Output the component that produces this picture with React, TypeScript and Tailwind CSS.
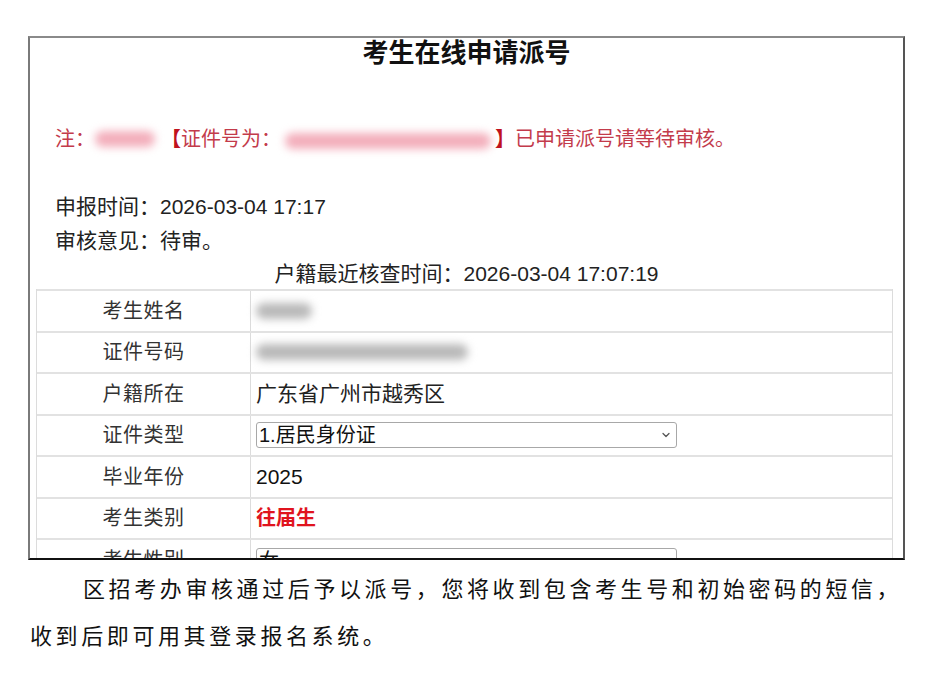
import { ChevronDown } from "lucide-react";

const cjk = "font-['Liberation_Sans','Noto_Sans_CJK_SC',sans-serif]";

function Blur({ w, tone }: { w: number; tone: "pink" | "gray" }) {
  return (
    <span
      className={
        "inline-block h-[16px] rounded-full blur-[4px] align-middle " +
        (tone === "pink" ? "bg-[#f3aebb]" : "bg-[#b9b9b9]")
      }
      style={{ width: w }}
    />
  );
}

function FakeSelect({ label }: { label: string }) {
  return (
    <div className="flex h-[26px] w-[421px] items-center justify-between rounded-[3px] border-[1.5px] border-[#a8a8a8] bg-white pl-[2px] pr-[4px]">
      <span className="text-[20px] leading-none text-[#111]">{label}</span>
      <ChevronDown className="h-[12px] w-[12px] text-[#555]" strokeWidth={2.5} />
    </div>
  );
}

type Row = { label: string; value: React.ReactNode };

const rows: Row[] = [
  { label: "考生姓名", value: <Blur w={56} tone="gray" /> },
  { label: "证件号码", value: <Blur w={212} tone="gray" /> },
  { label: "户籍所在", value: <span className="text-[21px] text-[#222]">广东省广州市越秀区</span> },
  { label: "证件类型", value: <FakeSelect label="1.居民身份证" /> },
  { label: "毕业年份", value: <span className="text-[21px] text-[#111]">2025</span> },
  { label: "考生类别", value: <span className="text-[20px] font-bold text-[#e0141e]">往届生</span> },
  { label: "考生性别", value: <div className="mt-[8px] self-start"><FakeSelect label="女" /></div> },
];

export default function App() {
  return (
    <div className={`min-h-[682px] w-[934px] bg-white ${cjk}`}>
      <div className="h-[36px]" />
      <div className="ml-[28px] h-[524px] w-[877px] overflow-hidden border-x-2 border-t-2 border-b-2 border-l-[#7a7a7a] border-r-[#555] border-t-[#8a8a8a] border-b-[#111]">
        <h1 className="h-[30px] text-center text-[26px] font-bold leading-[30px] text-[#111]">考生在线申请派号</h1>

        <p className="mt-[57px] flex h-[28px] items-center pl-[25px] text-[20px] leading-[28px] text-[#c33b4b]">
          <span>注：</span>
          <Blur w={60} tone="pink" />
          <span className="ml-[6px] font-bold text-[#c0121e]">【</span>
          <span>证件号为：</span>
          <span className="ml-[4px]"><Blur w={206} tone="pink" /></span>
          <span className="ml-[4px] font-bold text-[#c0121e]">】</span>
          <span>已申请派号请等待审核。</span>
        </p>

        <div className="mt-[37px] pl-[25px] text-[21px] leading-[34px] text-[#222]">
          <div>申报时间：2026-03-04 17:17</div>
          <div>审核意见：待审。</div>
        </div>
        <div className="flex h-[31px] items-center justify-center text-[21px] text-[#222]">
          户籍最近核查时间：2026-03-04 17:07:19
        </div>

        <div className="ml-[6px] w-[857px] border-x border-[#dcdcdc]">
          {rows.map((r) => (
            <div key={r.label} className="flex h-[41.5px] border-t-2 border-[#e2e2e2]">
              <div className="flex w-[214px] shrink-0 items-center justify-center border-r border-[#dcdcdc] text-[20px] tracking-[0.5px] text-[#333]">
                {r.label}
              </div>
              <div className="flex flex-1 items-center pl-[5px]">{r.value}</div>
            </div>
          ))}
        </div>
      </div>

      <p className="ml-[30px] mt-[6px] w-[890px] indent-[53px] text-[22px] leading-[47px] tracking-[3.6px] text-[#111]">
        区招考办审核通过后予以派号，您将收到包含考生号和初始密码的短信，收到后即可用其登录报名系统。
      </p>
    </div>
  );
}
